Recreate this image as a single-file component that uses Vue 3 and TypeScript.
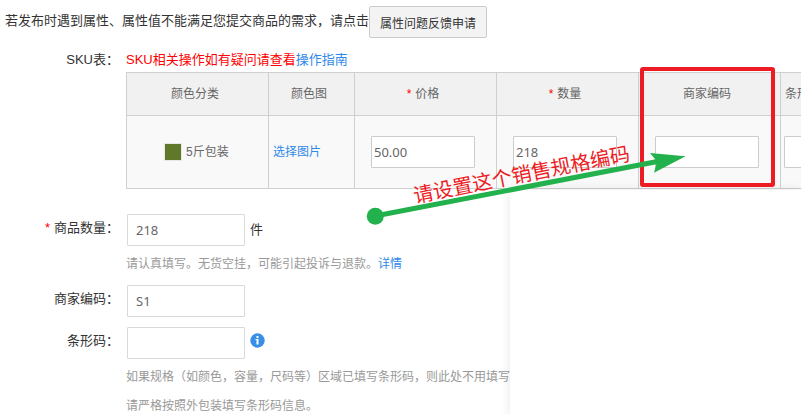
<script setup lang="ts">
import { ref } from 'vue'

interface Column {
  title: string
  required?: boolean
  cls: string
}

const columns: Column[] = [
  { title: '颜色分类', cls: 'wide' },
  { title: '颜色图', cls: 'narrow' },
  { title: '价格', required: true, cls: 'wide' },
  { title: '数量', required: true, cls: 'wide' },
  { title: '商家编码', cls: 'wide' },
  { title: '条形码', cls: 'wide' },
]

const price = ref('50.00')
const skuCount = ref('218')
const skuCode = ref('')
const skuBarcode = ref('')
const count = ref('218')
const code = ref('S1')
const barcode = ref('')
</script>

<template>
  <main class="page">
    <div class="notice">
      <span>若发布时遇到属性、属性值不能满足您提交商品的需求，请点击</span>
      <button type="button" class="feedback">属性问题反馈申请</button>
    </div>

    <section class="row sku">
      <div class="label">SKU表：</div>
      <div class="content">
        <p class="tip">SKU相关操作如有疑问请查看<a href="#guide">操作指南</a></p>
        <div class="scroller">
          <table>
            <colgroup>
              <col v-for="c in columns" :key="c.title" :class="c.cls" />
            </colgroup>
            <thead>
              <tr>
                <th v-for="c in columns" :key="c.title" scope="col">
                  <span v-if="c.required" class="star">*</span>{{ c.title }}
                </th>
              </tr>
            </thead>
            <tbody>
              <tr>
                <td>
                  <span class="color"><i class="swatch"></i>5斤包装</span>
                </td>
                <td class="pick"><a href="#image">选择图片</a></td>
                <td><input v-model="price" type="text" aria-label="价格" /></td>
                <td><input v-model="skuCount" type="text" aria-label="数量" /></td>
                <td><input v-model="skuCode" type="text" aria-label="商家编码" /></td>
                <td><input v-model="skuBarcode" type="text" aria-label="条形码" /></td>
              </tr>
            </tbody>
          </table>
        </div>
      </div>
    </section>

    <section class="row count">
      <label class="label" for="count"><span class="star">*</span>商品数量：</label>
      <div class="content">
        <div class="field">
          <input id="count" v-model="count" type="text" />
          <span>件</span>
        </div>
        <p class="hint">请认真填写。无货空挂，可能引起投诉与退款。<a href="#detail">详情</a></p>
      </div>
    </section>

    <section class="row code">
      <label class="label" for="code">商家编码：</label>
      <div class="content">
        <div class="field"><input id="code" v-model="code" type="text" /></div>
      </div>
    </section>

    <section class="row barcode">
      <label class="label" for="barcode">条形码：</label>
      <div class="content">
        <div class="field">
          <input id="barcode" v-model="barcode" type="text" />
          <svg class="info" width="15" height="15" viewBox="0 0 15 15" aria-hidden="true">
            <circle cx="7.5" cy="7.5" r="7.2" fill="#3a8ee6" />
            <rect x="6.5" y="3" width="2" height="2" fill="#fff" />
            <path d="M5.500 6h3v5.500h-2V7h-1z" fill="#fff" />
          </svg>
        </div>
        <p class="hint">如果规格（如颜色，容量，尺码等）区域已填写条形码，则此处不用填写</p>
        <p class="hint last">请严格按照外包装填写条形码信息。</p>
      </div>
    </section>

    <div class="panel"></div>

    <svg class="notes" width="802" height="415" viewBox="0 0 802 415">
      <rect x="642" y="69" width="131" height="116" rx="1" fill="none" stroke="#ed1c24" stroke-width="4" />
      <path d="M375 216L660 161" stroke="#22b14c" stroke-width="5" fill="none" />
      <circle cx="375.3" cy="216.3" r="8.5" fill="#22b14c" />
      <path d="M685.5 156.3L650 153L657 161.500L654 172.800Z" fill="#22b14c" />
      <text x="415" y="203" transform="rotate(-11.2 415 203)">请设置这个销售规格编码</text>
    </svg>
  </main>
</template>

<style>
body {
  margin: 0;
  background: #fff;
}
</style>

<style scoped>
.page {
  position: relative;
  box-sizing: border-box;
  min-height: 100vh;
  padding: 6px 1px 0 0;
  overflow: hidden;
  color: #333;
  font: 13px/24px "Liberation Sans", "Noto Sans CJK SC", sans-serif;
}
p {
  margin: 0;
}
a {
  color: #3089e8;
  text-decoration: none;
}
.notice {
  display: flex;
  padding-left: 5px;
  line-height: 30px;
  white-space: nowrap;
}
.feedback {
  box-sizing: border-box;
  height: 32px;
  padding: 0 10px;
  border: 1px solid #ccc;
  border-radius: 2px;
  background: #f3f3f3;
  color: #333;
  font: 12px "Liberation Sans", "Noto Sans CJK SC", sans-serif;
}
.row {
  display: grid;
  grid-template-columns: 119px minmax(0, 1fr);
  column-gap: 7px;
}
.label {
  text-align: right;
  line-height: 28px;
  white-space: nowrap;
}
.star {
  margin-right: 4px;
  color: #f00;
}
.sku {
  margin-top: 10px;
}
.sku .label {
  line-height: 24px;
}
.tip {
  color: #f00;
}
.scroller {
  overflow: hidden;
}
table {
  width: 796px;
  table-layout: fixed;
  border-collapse: separate;
  border-spacing: 0;
  border-top: 1px solid #d0d0d0;
  border-left: 1px solid #d0d0d0;
  color: #666;
  font-size: 12px;
}
col.wide {
  width: 142px;
}
col.narrow {
  width: 86px;
}
th,
td {
  box-sizing: border-box;
  border-right: 1px solid #d0d0d0;
  border-bottom: 1px solid #d0d0d0;
}
th {
  height: 43px;
  padding: 0 5px 0 0;
  background: #f1f1f1;
  font-weight: normal;
}
td {
  height: 73px;
  padding: 0 0 0 16px;
  background: #f9f9f9;
}
th:last-child {
  padding-left: 4px;
  text-align: left;
}
td:last-child {
  padding-left: 3px;
}
td.pick {
  padding-left: 4px;
}
.color {
  display: flex;
  align-items: center;
  gap: 4px;
  padding-left: 21px;
}
.swatch {
  width: 16px;
  height: 16px;
  border: 1px solid #e8e8e8;
  background: #5f7829;
}
input {
  box-sizing: border-box;
  width: 118px;
  height: 32px;
  margin: 0;
  padding: 0 8px;
  border: 1px solid #d9d9d9;
  border-radius: 1px;
  background: #fff;
  color: #666;
  font: 13px "Noto Sans", "Noto Sans CJK SC", sans-serif;
}
td input {
  display: block;
  width: 104px;
  padding: 0 2px;
  border-color: #ccc;
}
.count {
  margin-top: 25px;
}
.code {
  margin-top: 12px;
}
.barcode {
  margin-top: 10px;
}
.field {
  display: flex;
  align-items: center;
  gap: 5px;
  padding-left: 1px;
}
.info {
  align-self: flex-start;
  margin-top: 6px;
}
.hint {
  margin-top: 9px;
  color: #999;
  font-size: 12px;
  line-height: 18px;
  white-space: nowrap;
}
.hint.last {
  margin-top: 11px;
}
.panel {
  position: absolute;
  top: 190px;
  right: 0;
  bottom: 0;
  left: 510px;
  background: #fff;
  box-shadow: 0 0 10px rgba(0, 0, 0, 0.1);
}
.notes {
  position: absolute;
  top: 0;
  left: 0;
  pointer-events: none;
}
.notes text {
  fill: #ed1c24;
  font-family: "Noto Sans CJK SC", sans-serif;
  font-size: 20px;
  font-weight: 400;
}
</style>
